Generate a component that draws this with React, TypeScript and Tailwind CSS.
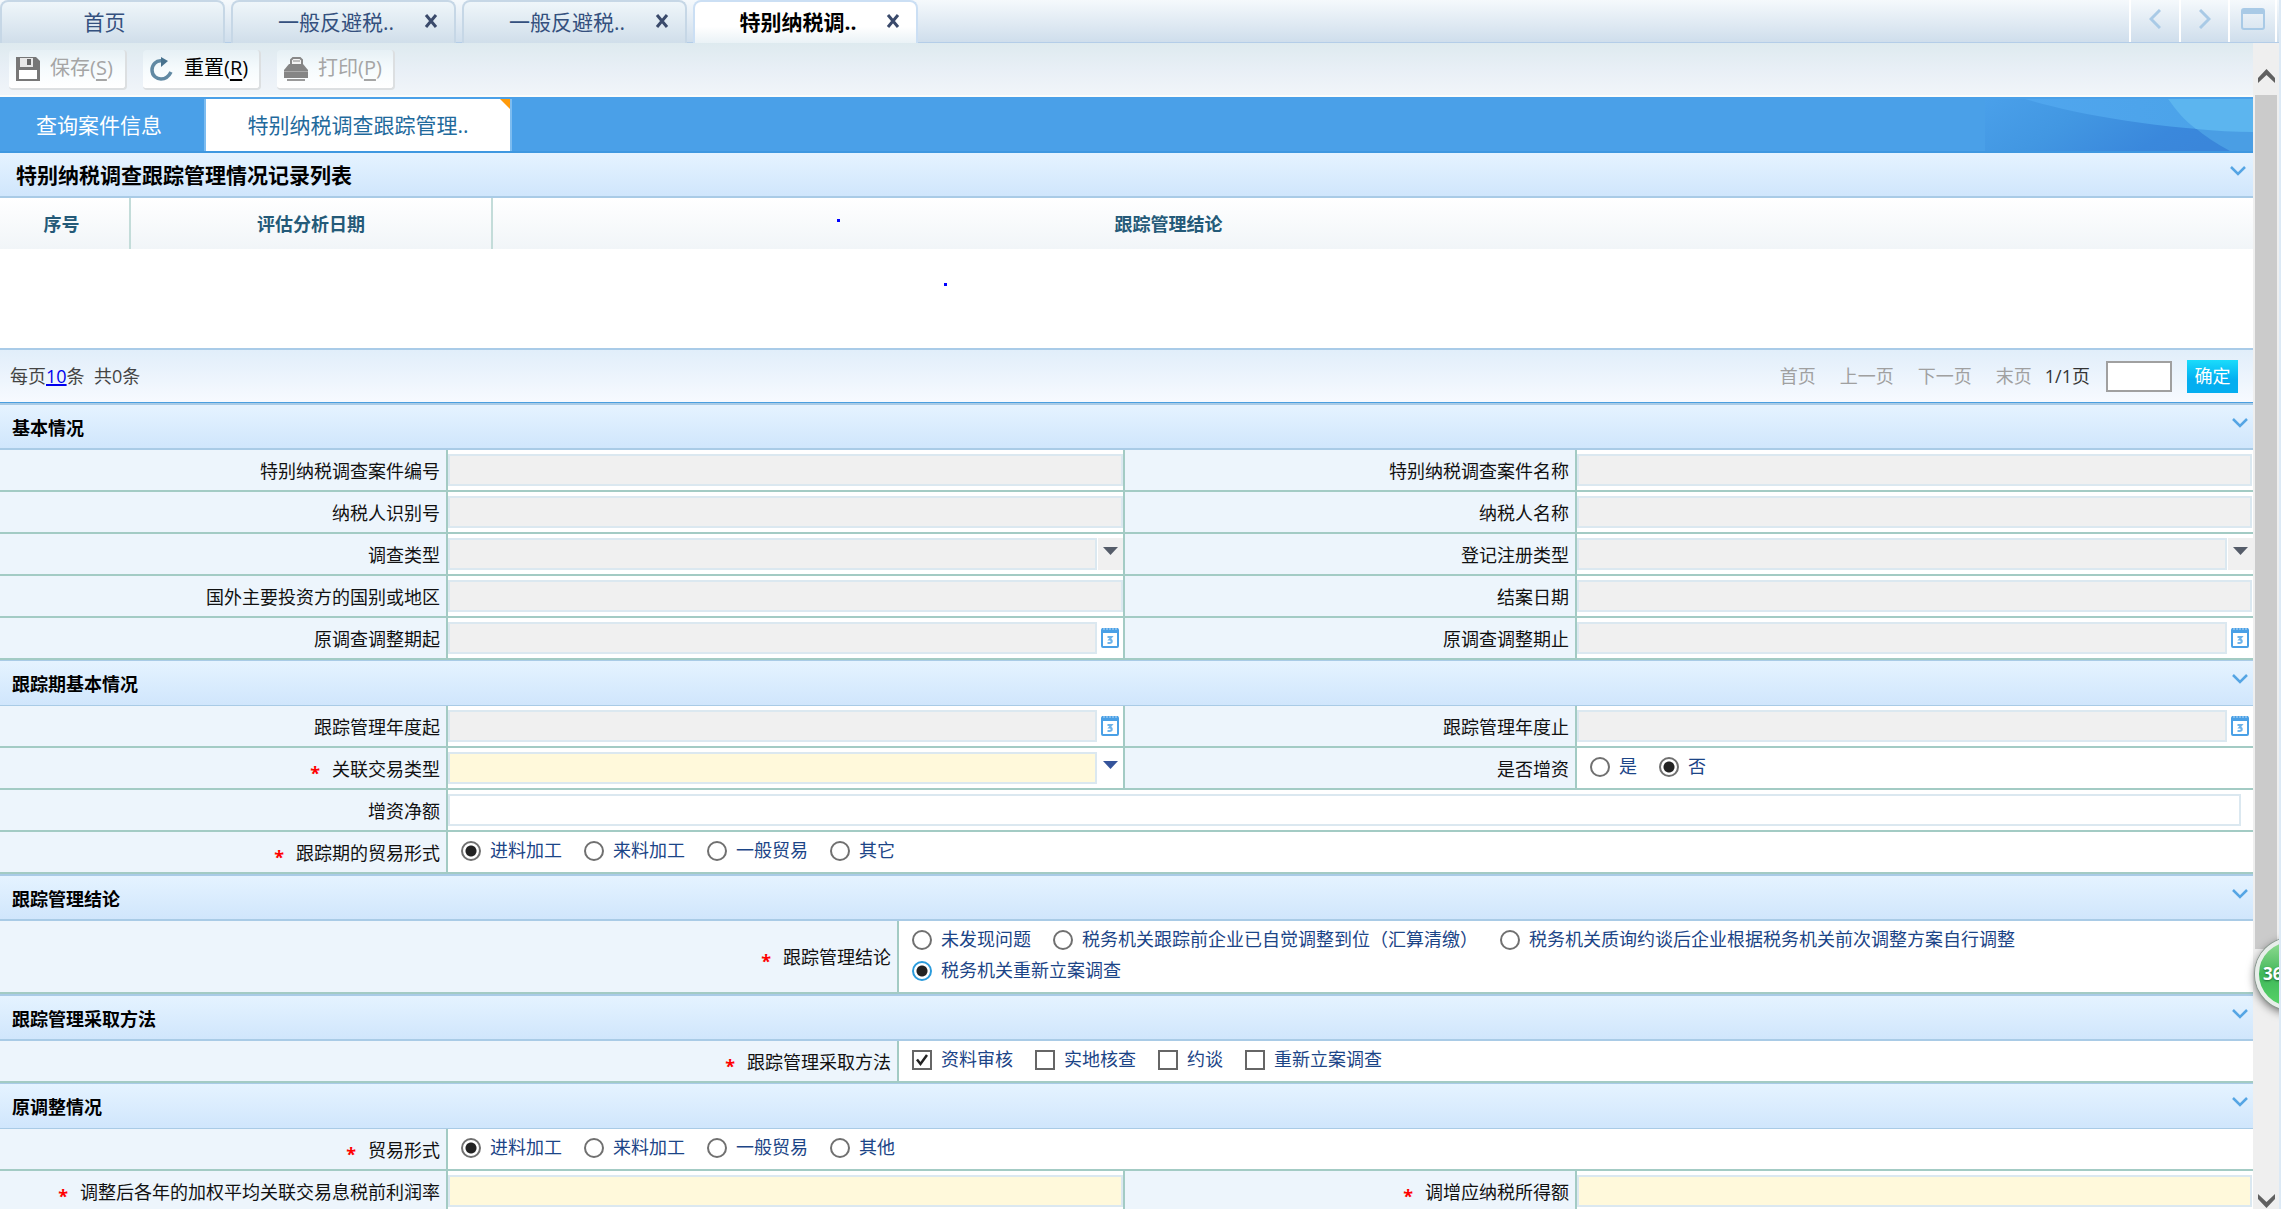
import { useState, type ReactNode } from 'react'

const tradeTypes = ['进料加工', '来料加工', '一般贸易']

const conclusions = [
  '未发现问题',
  '税务机关跟踪前企业已自觉调整到位（汇算清缴）',
  '税务机关质询约谈后企业根据税务机关前次调整方案自行调整',
  '税务机关重新立案调查',
]

const methods = ['资料审核', '实地核查', '约谈', '重新立案调查']

/* Icons */

function SaveIcon() {
  return (
    <svg width="24" height="24" viewBox="0 0 24 24">
      <path d="M0 0h20l4 4v20H0z" fill="#777" />
      <path d="M4 1h13v9H4z" fill="#e8e8e8" />
      <path d="M11 2h4v6h-4z" fill="#666" />
      <path d="M3 13h18v9H3z" fill="#fff" />
    </svg>
  )
}

function ResetIcon() {
  return (
    <svg width="24" height="24" viewBox="0 0 24 24" fill="none">
      <path d="M12 4C6 3 2 8 2 13c0 6 5 9 9 9 5 0 8-3 10-7" stroke="#6189a3" strokeWidth="3.500" />
      <path d="M11 0l7 4-7 6z" fill="#48728e" />
    </svg>
  )
}

function PrintIcon() {
  return (
    <svg width="24" height="24" viewBox="0 0 24 24">
      <path d="M7 7V3l2-2h7l2 2v4" fill="#f4f4f4" stroke="#888" strokeWidth="2" />
      <path d="M9 4h7" stroke="#888" strokeWidth="1" />
      <path d="M5 7h14l5 6v8H0v-8z" fill="#858585" />
      <path d="M0 14h24v1H0z" fill="#aaa" />
      <path d="M3 22h18v2H3z" fill="#999" />
    </svg>
  )
}

function CloseIcon() {
  return (
    <svg width="14" height="14" viewBox="0 0 14 14">
      <path d="M2 1l10 12M12 1L2 13" stroke="#3a4a6b" strokeWidth="3" />
    </svg>
  )
}

function CalendarIcon() {
  return (
    <svg width="18" height="21" viewBox="0 0 18 21" fill="none">
      <rect x="1" y="2" width="16" height="18" rx="1" fill="#fff" stroke="#4aa0e6" strokeWidth="2" />
      <path d="M1 1h16v5H1z" fill="#4aa0e6" />
      <path d="M3 1v2M6 1v2M9 1v2M12 1v2M15 1v2" stroke="#b9dcf7" />
      <path d="M6.500 10h4l-2 2.500c3 0 3 3.500 0 3.500H6.500" stroke="#6db3ea" strokeWidth="2" />
    </svg>
  )
}

function ArrowIcon({ color }: { color: string }) {
  return (
    <svg width="15" height="8" viewBox="0 0 15 8">
      <path d="M0 0h15L7.500 8z" fill={color} />
    </svg>
  )
}

function ScrollArrow({ down }: { down?: boolean }) {
  return (
    <svg width="17" height="14" viewBox="0 0 17 14">
      <path d={down ? 'M0 0l8.500 8L17 0v5l-8.500 9L0 5z' : 'M0 14l8.500-8 8.500 8V9L8.500 0 0 9z'} fill="#606060" />
    </svg>
  )
}

/* Form pieces */

function SectionHeader({ title, thin, large }: { title: string; thin?: boolean; large?: boolean }) {
  return (
    <div
      className={
        'flex items-center justify-between bg-gradient-to-b from-[#e5f3ff] to-[#d0e6fc] border-[#a9cbe6] ' +
        (large ? 'h-[45px] border-b-2 pl-4 pr-[7px]' : thin ? 'h-[46px] border-y pl-3 pr-[5px]' : 'h-[47px] border-y-2 pl-3 pr-[5px]')
      }
    >
      <h2 className={large ? 'text-[21px] font-bold text-black' : 'pt-0.5 text-[18px] font-bold text-black'}>{title}</h2>
      <button type="button" aria-label={'收起' + title} className="pb-2">
        <svg width="16" height="10" viewBox="0 0 16 10" fill="none">
          <path d="M1 1l7 7 7-7" stroke="#55a5e4" strokeWidth="2.500" />
        </svg>
      </button>
    </div>
  )
}

function LabelCell({ children, required, htmlFor, id }: { children: string; required?: boolean; htmlFor?: string; id?: string }) {
  return (
    <div className="flex min-h-[42px] items-center justify-end border-b-2 border-r-2 border-[#a3cbc4] bg-[#edf5fc] pr-1.5 pt-px">
      {required && <span className="mr-3 pt-2 text-[18px] font-bold leading-5 text-[#ff0000]">*</span>}
      {htmlFor ? <label htmlFor={htmlFor}>{children}</label> : <span id={id}>{children}</span>}
    </div>
  )
}

type FieldProps = {
  id: string
  label: string
  kind?: 'text' | 'select' | 'date'
  required?: boolean
  last?: boolean
}

function Field({ id, label, kind = 'text', required, last }: FieldProps) {
  const box =
    'h-8 min-w-0 flex-1 appearance-none border-2 border-[#dbe8f0] px-1 outline-none ' +
    (required ? 'bg-[#fff9db]' : 'bg-[#f0f0f0]')

  return (
    <>
      <LabelCell htmlFor={id} required={required}>{label}</LabelCell>
      <div className={'flex items-center border-b-2 border-[#a3cbc4] bg-white ' + (last ? '' : 'border-r-2')}>
        {kind === 'select' ? (
          <select id={id} disabled={!required} className={box + ' opacity-100'}>
            <option></option>
          </select>
        ) : (
          <input id={id} type="text" readOnly={!required} className={box} />
        )}
        {kind === 'select' && (
          <span className={'ml-px flex h-8 w-[25px] items-center justify-center pb-1.5 ' + (required ? '' : 'bg-[#f0f0f0]')}>
            <ArrowIcon color={required ? '#35549b' : '#555c69'} />
          </span>
        )}
        {kind === 'date' && (
          <button type="button" aria-label={'选择' + label} className="flex w-[26px] justify-center pb-px">
            <CalendarIcon />
          </button>
        )}
        {kind === 'text' && last && <span className="w-px" />}
      </div>
    </>
  )
}

function OptionGroup({ labelledBy, children }: { labelledBy: string; children: ReactNode }) {
  return (
    <div
      role="group"
      aria-labelledby={labelledBy}
      className="flex flex-wrap gap-x-[22px] border-b-2 border-[#a3cbc4] bg-white pb-1.5 pl-[13px] pr-10 pt-[3px]"
    >
      {children}
    </div>
  )
}

type RadiosProps = {
  name: string
  options: string[]
  initial: string
  focused?: boolean
}

function Radios({ name, options, initial, focused }: RadiosProps) {
  const [value, setValue] = useState(initial)

  return (
    <>
      {options.map((option) => (
        <label key={option} className="flex items-center gap-[9px] leading-[31px] text-[#1c4587]">
          <input
            type="radio"
            name={name}
            checked={value === option}
            onChange={() => setValue(option)}
            className={
              'size-5 appearance-none rounded-full border-2 bg-white checked:bg-[radial-gradient(circle,#222_5px,#fff_6px)] ' +
              (focused && value === option ? 'border-[#2a9bdc]' : 'border-[#707070]')
            }
          />
          {option}
        </label>
      ))}
    </>
  )
}

function Methods() {
  const [checked, setChecked] = useState(['资料审核'])

  const toggle = (method: string) =>
    setChecked(checked.includes(method) ? checked.filter((m) => m !== method) : [...checked, method])

  return (
    <>
      {methods.map((method) => (
        <label key={method} className="flex items-center gap-[9px] leading-[31px] text-[#1c4587]">
          <span className="relative flex size-5">
            <input
              type="checkbox"
              checked={checked.includes(method)}
              onChange={() => toggle(method)}
              className="size-5 appearance-none border-2 border-[#666] bg-white"
            />
            {checked.includes(method) && (
              <svg className="pointer-events-none absolute inset-0" width="20" height="20" viewBox="0 0 20 20" fill="none">
                <path d="M5 9.500l3.500 4.500L15 5" stroke="#222" strokeWidth="2.500" />
              </svg>
            )}
          </span>
          {method}
        </label>
      ))}
    </>
  )
}

/* Page chrome */

function WindowTab({ title, active, closable }: { title: string; active?: boolean; closable?: boolean }) {
  return (
    <div
      className={
        'flex h-[43px] w-[225px] items-center rounded-t-lg border-x-2 border-t-2 ' +
        (active
          ? 'border-[#cbdff4] bg-gradient-to-b from-white from-60% to-[#eaf2f6]'
          : 'border-[#c6d7e6] bg-gradient-to-b from-[#eff6fa] to-[#d0deea]')
      }
    >
      <button
        type="button"
        className={
          'pb-0.5 text-[21px] ' +
          (closable ? 'ml-[43px] w-[120px] ' : 'w-[205px] ') +
          (active ? 'font-bold text-black' : 'text-[#34507e]')
        }
      >
        {title}
      </button>
      {closable && (
        <button type="button" aria-label="关闭" className="ml-7 pb-1">
          <CloseIcon />
        </button>
      )}
    </div>
  )
}

function ToolButton({ icon, text, shortcut, disabled }: { icon: ReactNode; text: string; shortcut: string; disabled?: boolean }) {
  return (
    <button
      type="button"
      disabled={disabled}
      className={
        'flex h-10 w-[118px] items-center gap-2.5 rounded-sm border-b-2 border-r-2 border-[#dcdfe1] bg-gradient-to-b from-[#e6f0f5] via-[#f6fbfd] to-white pl-[7px] text-[20px] ' +
        (disabled ? 'text-[#a5a5a5]' : 'text-black')
      }
    >
      {icon}
      <span className="whitespace-nowrap pb-0.5">
        {text}(<u className="underline-offset-4">{shortcut}</u>)
      </span>
    </button>
  )
}

function TopBar() {
  return (
    <header className="flex h-[43px] shrink-0 justify-between border-b border-[#b4cde8] bg-gradient-to-b from-[#f5f9fc] to-[#cfdeec] pr-0.5">
      <nav className="flex gap-1.5">
        <WindowTab title="首页" />
        <WindowTab title="一般反避税.." closable />
        <WindowTab title="一般反避税.." closable />
        <WindowTab title="特别纳税调.." closable active />
      </nav>
      <div className="flex">
        <button type="button" aria-label="向左" className="flex w-[50px] items-center justify-center border-l-2 border-white pb-1">
          <svg width="12" height="20" viewBox="0 0 12 20" fill="none">
            <path d="M11 1L2 10l9 9" stroke="#a9cae6" strokeWidth="3" />
          </svg>
        </button>
        <button type="button" aria-label="向右" className="flex w-[49px] items-center justify-center border-l-2 border-white pb-1">
          <svg width="12" height="20" viewBox="0 0 12 20" fill="none">
            <path d="M1 1l9 9-9 9" stroke="#a9cae6" strokeWidth="3" />
          </svg>
        </button>
        <button type="button" aria-label="最大化" className="flex w-[49px] items-center justify-center border-x-2 border-white pb-1">
          <svg width="24" height="22" viewBox="0 0 24 22" fill="none">
            <rect x="1" y="1" width="22" height="20" rx="2" stroke="#a9cae6" strokeWidth="2" />
            <path d="M1 1h22v5H1z" fill="#a9cae6" />
          </svg>
        </button>
      </div>
    </header>
  )
}

function PageTabs() {
  return (
    <nav className="flex h-14 border-b-2 border-t-2 border-b-[#3f98e0] border-t-[#4aa0e8] bg-[#4aa0e8] text-[21px]">
      <button type="button" className="w-[204px] pr-1.5 text-white">查询案件信息</button>
      <button type="button" className="relative w-[308px] border-x-2 border-[#7dbcf0] bg-white text-[#1f6a9c]">
        特别纳税调查跟踪管理..
        <svg className="absolute right-0 top-0" width="10" height="10" viewBox="0 0 10 10">
          <path d="M0 0h10v10z" fill="#ff9a0a" />
        </svg>
      </button>
      <svg className="ml-auto" width="268" height="52" viewBox="0 0 268 52">
        <defs>
          <linearGradient id="wave" x1="0" y1="0" x2="1" y2="0.300">
            <stop offset="0" stopColor="#4aa0ea" />
            <stop offset="0.400" stopColor="#4297e2" />
            <stop offset="0.800" stopColor="#3a88dc" />
            <stop offset="1" stopColor="#3a86da" />
          </linearGradient>
          <linearGradient id="waveTop" x1="0" y1="0" x2="1" y2="0">
            <stop offset="0" stopColor="#50a6ee" />
            <stop offset="1" stopColor="#4aa2e8" />
          </linearGradient>
        </defs>
        <path d="M0 0h268v52H0z" fill="url(#wave)" />
        <path d="M40 0C90 15 170 30 268 33V0z" fill="url(#waveTop)" />
        <path d="M183 0c15 20 35 38 62 52h23V0z" fill="#4a9ee4" />
        <path d="M183 0c8 11 17 22 28 30 20 2 38 3 57 3V0z" fill="#5cb5ef" />
      </svg>
    </nav>
  )
}

function RecordList() {
  return (
    <section className="relative">
      <SectionHeader title="特别纳税调查跟踪管理情况记录列表" large />
      <div className="h-[150px]">
        <table className="w-full table-fixed border-collapse">
          <thead>
            <tr className="h-[51px] bg-gradient-to-b from-white to-[#f1f5f8] text-[#245a78]">
              <th className="w-[130px] border-r-2 border-[#c3dcd9] pr-1.5">序号</th>
              <th className="w-[362px] border-r-2 border-[#c3dcd9]">评估分析日期</th>
              <th className="w-[60%]">跟踪管理结论</th>
              <td></td>
            </tr>
          </thead>
          <tbody></tbody>
        </table>
      </div>
      {/* stray ink marks */}
      <span className="absolute left-[837px] top-[66px] size-[3px] bg-[#0000ff]" />
      <span className="absolute left-[944px] top-[130px] size-[3px] bg-[#0000ff]" />
      <div className="flex h-[55px] items-center justify-between border-b border-t-2 border-b-[#4a9fe0] border-t-[#a9cbe8] bg-gradient-to-b from-[#e1eefa] to-[#f7faff] pl-2.5 pr-[15px] text-[#444]">
        <p>
          每页<a href="#" className="text-[#0000ee] underline decoration-2">10</a>条&nbsp; 共0条
        </p>
        <div className="flex items-center">
          <div className="mr-[13px] flex gap-6 text-[#a0a0a0] [text-shadow:1px_1px_0_#fff]">
            <button type="button">首页</button>
            <button type="button">上一页</button>
            <button type="button">下一页</button>
            <button type="button">末页</button>
          </div>
          <span className="text-[#333]">1/1页</span>
          <input type="text" aria-label="页码" className="ml-4 h-[31px] w-[66px] border-2 border-[#a0a0a0] bg-white px-1" />
          <button type="button" className="ml-[15px] h-[33px] w-[51px] bg-gradient-to-b from-[#1bdcfb] to-[#04aef0] to-60% text-white">
            确定
          </button>
        </div>
      </div>
    </section>
  )
}

function ScrollBar() {
  return (
    <div aria-hidden="true" className="flex w-[26px] shrink-0 flex-col items-center bg-[#efefef]">
      <div className="flex h-[52px] items-end pb-3">
        <ScrollArrow />
      </div>
      <div className="w-[22px] flex-[855] bg-[#cbcbcb]" />
      <div className="flex flex-[259] items-end pb-px">
        <ScrollArrow down />
      </div>
    </div>
  )
}

const fourCols = 'grid grid-cols-[448fr_677fr_452fr_676fr]'
const wideCols = 'grid grid-cols-[448fr_1805fr]'
const halfCols = 'grid grid-cols-[899fr_1354fr]'

export default function App() {
  return (
    <div className="relative flex h-screen flex-col overflow-hidden border-r-2 border-[#dce9f5] bg-white font-['Open_Sans','Noto_Sans_CJK_SC',sans-serif] text-[18px] leading-6 text-[#111]">
      <TopBar />
      <div className="flex min-h-0 flex-1">
        <main className="min-w-0 flex-1 overflow-y-auto [scrollbar-width:none]">
          {/* Toolbar */}
          <div className="flex h-[54px] gap-4 border-b-2 border-[#fbfcfb] bg-gradient-to-b from-[#deeaef] via-[#e8eff6] to-[#f1f5f9] pl-[9px] pt-[7px]">
            <ToolButton icon={<SaveIcon />} text="保存" shortcut="S" disabled />
            <ToolButton icon={<ResetIcon />} text="重置" shortcut="R" />
            <ToolButton icon={<PrintIcon />} text="打印" shortcut="P" disabled />
          </div>

          <PageTabs />
          <RecordList />

          <SectionHeader title="基本情况" />
          <div className={fourCols}>
            <Field id="caseNo" label="特别纳税调查案件编号" />
            <Field id="caseName" label="特别纳税调查案件名称" last />
            <Field id="taxpayerId" label="纳税人识别号" />
            <Field id="taxpayerName" label="纳税人名称" last />
            <Field id="surveyType" label="调查类型" kind="select" />
            <Field id="registerType" label="登记注册类型" kind="select" last />
            <Field id="investorCountry" label="国外主要投资方的国别或地区" />
            <Field id="closeDate" label="结案日期" last />
            <Field id="adjustFrom" label="原调查调整期起" kind="date" />
            <Field id="adjustTo" label="原调查调整期止" kind="date" last />
          </div>

          <SectionHeader title="跟踪期基本情况" thin />
          <div className={fourCols}>
            <Field id="trackFrom" label="跟踪管理年度起" kind="date" />
            <Field id="trackTo" label="跟踪管理年度止" kind="date" last />
            <Field id="relatedType" label="关联交易类型" kind="select" required />
            <LabelCell id="increaseLabel">是否增资</LabelCell>
            <OptionGroup labelledBy="increaseLabel">
              <Radios name="increase" options={['是', '否']} initial="否" />
            </OptionGroup>
          </div>
          <div className={wideCols}>
            <LabelCell htmlFor="netIncrease">增资净额</LabelCell>
            <div className="flex items-center border-b-2 border-[#a3cbc4] pr-3">
              <input id="netIncrease" type="text" className="h-8 w-full border-2 border-[#dbe8f0] bg-white px-1 outline-none" />
            </div>
            <LabelCell id="trackTradeLabel" required>跟踪期的贸易形式</LabelCell>
            <OptionGroup labelledBy="trackTradeLabel">
              <Radios name="trackTrade" options={[...tradeTypes, '其它']} initial="进料加工" />
            </OptionGroup>
          </div>

          <SectionHeader title="跟踪管理结论" />
          <div className={halfCols}>
            <LabelCell id="conclusionLabel" required>跟踪管理结论</LabelCell>
            <OptionGroup labelledBy="conclusionLabel">
              <Radios name="conclusion" options={conclusions} initial="税务机关重新立案调查" focused />
            </OptionGroup>
          </div>

          <SectionHeader title="跟踪管理采取方法" />
          <div className={halfCols}>
            <LabelCell id="methodLabel" required>跟踪管理采取方法</LabelCell>
            <OptionGroup labelledBy="methodLabel">
              <Methods />
            </OptionGroup>
          </div>

          <SectionHeader title="原调整情况" thin />
          <div className={wideCols}>
            <LabelCell id="tradeLabel" required>贸易形式</LabelCell>
            <OptionGroup labelledBy="tradeLabel">
              <Radios name="trade" options={[...tradeTypes, '其他']} initial="进料加工" />
            </OptionGroup>
          </div>
          <div className={fourCols}>
            <Field id="profitRate" label="调整后各年的加权平均关联交易息税前利润率" required />
            <Field id="taxableIncrease" label="调增应纳税所得额" required last />
          </div>
        </main>
        <ScrollBar />
      </div>

      {/* Floating assistant ball, half outside the window */}
      <button
        type="button"
        className="absolute -right-12 top-[938px] flex size-[72px] items-center rounded-full border-4 border-[#e8eeea] bg-gradient-to-b from-[#8fdc92] via-[#3fb75a] to-[#57d468] pl-1 text-[17px] font-bold text-white shadow-[0_3px_10px_rgba(0,0,0,0.6)] ring-1 ring-[#8a9a90] [text-shadow:0_1px_2px_#1d6b32]"
      >
        36
      </button>
    </div>
  )
}
